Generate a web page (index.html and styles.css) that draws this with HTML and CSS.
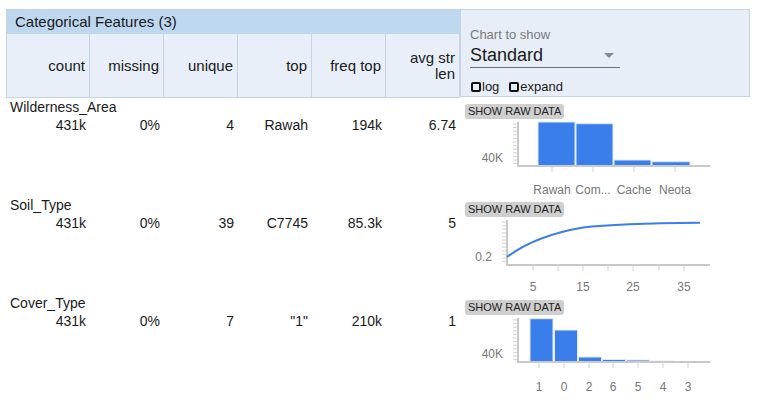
FILE: index.html
```html
<!DOCTYPE html>
<html lang="en">
<head>
    <meta charset="UTF-8">
    <title>Categorical Features</title>
    <link rel="stylesheet" href="styles.css">
</head>
<body>
    <div class="summary">
        <div class="head">
            <div class="head-left">
                <div class="title">Categorical Features (3)</div>
                <div class="cols">
                    <div class="col">count</div>
                    <div class="col">missing</div>
                    <div class="col">unique</div>
                    <div class="col">top</div>
                    <div class="col">freq top</div>
                    <div class="col">avg str len</div>
                </div>
            </div>
            <div class="controls">
                <div class="select-label">Chart to show</div>
                <div class="select">
                    <span>Standard</span>
                    <span class="arrow"></span>
                </div>
                <div class="checks">
                    <label class="check"><span class="box"></span>log</label>
                    <label class="check"><span class="box"></span>expand</label>
                </div>
            </div>
        </div>

        <div class="feature">
            <div class="stats">
                <div class="fname">Wilderness_Area</div>
                <div class="vals">
                    <span>431k</span><span>0%</span><span>4</span><span>Rawah</span><span>194k</span><span>6.74</span>
                </div>
            </div>
            <div class="chart">
                <button class="raw">SHOW RAW DATA</button>
                <svg width="285" height="77" viewBox="0 0 285 77">
                    <g class="minor">
                        <line x1="48" y1="4" x2="53" y2="4"/><line x1="48" y1="7.6" x2="53" y2="7.6"/>
                        <line x1="48" y1="11.2" x2="53" y2="11.2"/><line x1="48" y1="14.8" x2="53" y2="14.8"/>
                        <line x1="48" y1="18.4" x2="53" y2="18.4"/><line x1="48" y1="22" x2="53" y2="22"/>
                        <line x1="48" y1="25.6" x2="53" y2="25.6"/><line x1="48" y1="29.2" x2="53" y2="29.2"/>
                        <line x1="48" y1="32.8" x2="53" y2="32.8"/><line x1="48" y1="36.4" x2="53" y2="36.4"/>
                        <line x1="48" y1="40" x2="53" y2="40"/><line x1="48" y1="43.4" x2="53" y2="43.4"/>
                    </g>
                    <g class="bars">
                        <rect x="73" y="2" width="37" height="44"/>
                        <rect x="111" y="3.7" width="37" height="42.3"/>
                        <rect x="149" y="40" width="37" height="6"/>
                        <rect x="187" y="41.7" width="38" height="4.3"/>
                    </g>
                    <line class="axis" x1="53" y1="2" x2="53" y2="47"/>
                    <line class="axis" x1="52" y1="46" x2="245" y2="46"/>
                    <g class="ticks">
                        <line x1="87" y1="46" x2="87" y2="52"/><line x1="128" y1="46" x2="128" y2="52"/>
                        <line x1="169" y1="46" x2="169" y2="52"/><line x1="210" y1="46" x2="210" y2="52"/>
                    </g>
                    <text class="lbl" x="38" y="42" text-anchor="end">40K</text>
                    <text class="lbl" x="87" y="74" text-anchor="middle">Rawah</text>
                    <text class="lbl" x="128" y="74" text-anchor="middle">Com...</text>
                    <text class="lbl" x="169" y="74" text-anchor="middle">Cache</text>
                    <text class="lbl" x="210" y="74" text-anchor="middle">Neota</text>
                </svg>
            </div>
        </div>

        <div class="feature">
            <div class="stats">
                <div class="fname">Soil_Type</div>
                <div class="vals">
                    <span>431k</span><span>0%</span><span>39</span><span>C7745</span><span>85.3k</span><span>5</span>
                </div>
            </div>
            <div class="chart">
                <button class="raw">SHOW RAW DATA</button>
                <svg width="285" height="77" viewBox="0 0 285 77">
                    <g class="minor">
                        <line x1="37" y1="4" x2="42" y2="4"/><line x1="37" y1="7.6" x2="42" y2="7.6"/>
                        <line x1="37" y1="11.2" x2="42" y2="11.2"/><line x1="37" y1="14.8" x2="42" y2="14.8"/>
                        <line x1="37" y1="18.4" x2="42" y2="18.4"/><line x1="37" y1="22" x2="42" y2="22"/>
                        <line x1="37" y1="25.6" x2="42" y2="25.6"/><line x1="37" y1="29.2" x2="42" y2="29.2"/>
                        <line x1="37" y1="32.8" x2="42" y2="32.8"/><line x1="37" y1="36.4" x2="42" y2="36.4"/>
                        <line x1="37" y1="40" x2="42" y2="40"/><line x1="37" y1="43.6" x2="42" y2="43.6"/>
                    </g>
                    <line class="axis" x1="42" y1="2" x2="42" y2="48"/>
                    <line class="axis" x1="41" y1="47" x2="245" y2="47"/>
                    <g class="ticks">
                        <line x1="68" y1="47" x2="68" y2="53"/><line x1="93" y1="47" x2="93" y2="53"/>
                        <line x1="118" y1="47" x2="118" y2="53"/><line x1="143" y1="47" x2="143" y2="53"/>
                        <line x1="168" y1="47" x2="168" y2="53"/><line x1="194" y1="47" x2="194" y2="53"/>
                        <line x1="219" y1="47" x2="219" y2="53"/>
                    </g>
                    <path class="curve" d="M42 39 C58 27 80 16 118 9.5 C150 5.5 190 5 235 4.7"/>
                    <text class="lbl" x="27" y="43" text-anchor="end">0.2</text>
                    <text class="lbl" x="68" y="73" text-anchor="middle">5</text>
                    <text class="lbl" x="118" y="73" text-anchor="middle">15</text>
                    <text class="lbl" x="168" y="73" text-anchor="middle">25</text>
                    <text class="lbl" x="219" y="73" text-anchor="middle">35</text>
                </svg>
            </div>
        </div>

        <div class="feature">
            <div class="stats">
                <div class="fname">Cover_Type</div>
                <div class="vals">
                    <span>431k</span><span>0%</span><span>7</span><span>"1"</span><span>210k</span><span>1</span>
                </div>
            </div>
            <div class="chart">
                <button class="raw">SHOW RAW DATA</button>
                <svg width="285" height="77" viewBox="0 0 285 77">
                    <g class="minor">
                        <line x1="48" y1="4" x2="53" y2="4"/><line x1="48" y1="7.6" x2="53" y2="7.6"/>
                        <line x1="48" y1="11.2" x2="53" y2="11.2"/><line x1="48" y1="14.8" x2="53" y2="14.8"/>
                        <line x1="48" y1="18.4" x2="53" y2="18.4"/><line x1="48" y1="22" x2="53" y2="22"/>
                        <line x1="48" y1="25.6" x2="53" y2="25.6"/><line x1="48" y1="29.2" x2="53" y2="29.2"/>
                        <line x1="48" y1="32.8" x2="53" y2="32.8"/><line x1="48" y1="36.4" x2="53" y2="36.4"/>
                        <line x1="48" y1="40" x2="53" y2="40"/><line x1="48" y1="43.4" x2="53" y2="43.4"/>
                    </g>
                    <g class="bars">
                        <rect x="65" y="2.7" width="23" height="43.3"/>
                        <rect x="89.5" y="14" width="23" height="32"/>
                        <rect x="113.5" y="41" width="23" height="5"/>
                        <rect x="137.5" y="43.5" width="23" height="2.5"/>
                        <rect x="161.5" y="44" width="23" height="2"/>
                        <rect x="185.5" y="45" width="23" height="1"/>
                        <rect x="209.5" y="45.5" width="23" height="0.5"/>
                    </g>
                    <line class="axis" x1="53" y1="2" x2="53" y2="47"/>
                    <line class="axis" x1="52" y1="46" x2="245" y2="46"/>
                    <g class="ticks">
                        <line x1="74" y1="46" x2="74" y2="52"/><line x1="99" y1="46" x2="99" y2="52"/>
                        <line x1="124" y1="46" x2="124" y2="52"/><line x1="148" y1="46" x2="148" y2="52"/>
                        <line x1="173" y1="46" x2="173" y2="52"/><line x1="198" y1="46" x2="198" y2="52"/>
                        <line x1="223" y1="46" x2="223" y2="52"/>
                    </g>
                    <text class="lbl" x="38" y="42" text-anchor="end">40K</text>
                    <text class="lbl" x="74" y="75" text-anchor="middle">1</text>
                    <text class="lbl" x="99" y="75" text-anchor="middle">0</text>
                    <text class="lbl" x="124" y="75" text-anchor="middle">2</text>
                    <text class="lbl" x="148" y="75" text-anchor="middle">6</text>
                    <text class="lbl" x="173" y="75" text-anchor="middle">5</text>
                    <text class="lbl" x="198" y="75" text-anchor="middle">4</text>
                    <text class="lbl" x="223" y="75" text-anchor="middle">3</text>
                </svg>
            </div>
        </div>
    </div>
</body>
</html>
```

FILE: styles.css
```css
body {
    margin: 0;
    background-color: #fff;
    color: #1a1a1a;
    font-family: "Liberation Sans", Arial, sans-serif;
}

.summary {
    margin: 9px 0 0 6px;
    width: 744px;
}

.head {
    display: flex;
}

.head-left {
    width: 454px;
    border-left: 1px solid #c6d3e0;
    border-top: 1px solid #c6d3e0;
    box-sizing: border-box;
}

.title {
    background-color: #bdd7ee;
    height: 24px;
    line-height: 24px;
    padding-left: 8px;
    font-size: 15px;
    color: #1a1a1a;
}

.cols {
    display: grid;
    grid-template-columns: 83px repeat(5, 74px);
    height: 63px;
    background-color: #e8eff8;
    border-bottom: 1px solid #c6d3e0;
}

.col {
    display: flex;
    align-items: center;
    justify-content: flex-end;
    text-align: right;
    padding-right: 4px;
    font-size: 15px;
    line-height: 16px;
    border-right: 1px solid #c6d3e0;
}

.col:last-child {
    padding-left: 20px;
}

.controls {
    width: 290px;
    height: 88px;
    box-sizing: border-box;
    background-color: #e7eef8;
    border: 1px solid #c6d3e0;
    padding: 17px 0 0 9px;
}

.select-label {
    font-size: 13px;
    color: #7a7a7a;
    line-height: 16px;
}

.select {
    width: 150px;
    height: 24px;
    display: flex;
    justify-content: space-between;
    align-items: center;
    font-size: 18px;
    border-bottom: 1px solid #6f6f6f;
}

.arrow {
    width: 0;
    height: 0;
    margin-right: 6px;
    border-left: 5px solid transparent;
    border-right: 5px solid transparent;
    border-top: 5px solid #8a8a8a;
}

.checks {
    display: flex;
    gap: 9px;
    margin-top: 11px;
    font-size: 13px;
}

.check {
    display: flex;
    align-items: center;
    gap: 1px;
}

.box {
    width: 6px;
    height: 6px;
    border: 2px solid #111;
    border-radius: 2px;
    margin-left: 1px;
}

.feature {
    display: flex;
    height: 98px;
}

.stats {
    width: 454px;
    font-size: 14px;
}

.fname {
    line-height: 18px;
    padding-left: 4px;
}

.vals {
    display: grid;
    grid-template-columns: 84px repeat(5, 74px);
    line-height: 18px;
}

.vals span {
    text-align: right;
    padding-right: 4px;
}

.chart {
    width: 290px;
    padding: 6px 0 0 5px;
    box-sizing: border-box;
}

.raw {
    display: block;
    height: 15px;
    margin: 0 0 1px 0;
    padding: 0 3px;
    border: none;
    border-radius: 3px;
    background-color: #cfcfcf;
    color: #222;
    font-family: "Liberation Sans", Arial, sans-serif;
    font-size: 11px;
    line-height: 15px;
}

.chart svg {
    display: block;
}

.bars rect {
    fill: #3a7eec;
    stroke: #dfe9fb;
    stroke-width: 1;
}

.axis {
    stroke: #c9c9c9;
    stroke-width: 2;
}

.minor line,
.ticks line {
    stroke: #d3d3d3;
    stroke-width: 1;
}

.curve {
    fill: none;
    stroke: #3a7eec;
    stroke-width: 2;
}

.lbl {
    font-family: "Liberation Sans", Arial, sans-serif;
    font-size: 12px;
    fill: #777;
}
```
